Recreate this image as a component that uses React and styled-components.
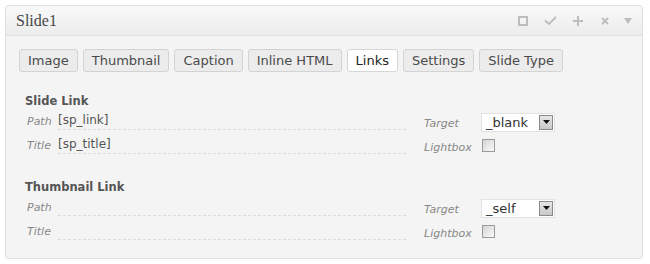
import React from "react";
import styled, { createGlobalStyle } from "styled-components";

const Global = createGlobalStyle`
  html, body { margin: 0; padding: 0; background: #fff; }
  body { font-family: "DejaVu Sans", Verdana, sans-serif; }
`;

const Panel = styled.div`
  margin: 5px 0 0 5px;
  width: 636px;
  border: 1px solid #dfdfdf;
  border-radius: 3px;
  background: #f4f4f4;
  box-sizing: content-box;
`;

const Header = styled.div`
  height: 29px;
  border-bottom: 1px solid #dfdfdf;
  background: linear-gradient(#f9f9f9, #ececec);
  display: flex;
  align-items: center;
  justify-content: space-between;
  padding: 0 4px 0 10px;
  border-radius: 3px 3px 0 0;
`;

const Title = styled.div`
  font-family: "Liberation Serif", "DejaVu Serif", serif;
  font-size: 16px;
  color: #464646;
  padding-top: 1px;
`;

const Icons = styled.div`
  display: flex;
  align-items: center;
  color: #bdbdbd;
`;

const IconBox = styled.span`
  display: inline-flex;
  width: ${(p) => p.w}px;
  justify-content: center;
`;

const Body = styled.div`
  padding: 13px 13px 18px 13px;
`;

const Tabs = styled.div`
  display: flex;
  gap: 5px;
  margin-bottom: 21px;
`;

const Tab = styled.div`
  height: 21px;
  line-height: 21px;
  padding: 0 8px;
  border: 1px solid ${(p) => (p.active ? "#d6d6d6" : "#d3d3d3")};
  border-radius: 3px;
  background: ${(p) => (p.active ? "#fff" : "#ececec")};
  color: ${(p) => (p.active ? "#222" : "#4a4a4a")};
  font-size: 13px;
  white-space: nowrap;
`;

const Section = styled.div`
  padding-left: 6px;
  & + & {
    margin-top: 25px;
  }
`;

const SectionTitle = styled.div`
  font-size: 11.5px;
  font-weight: bold;
  color: #555;
  height: 16px;
  line-height: 16px;
  margin-bottom: 1px;
`;

const Grid = styled.div`
  display: grid;
  grid-template-columns: 31px 366px 57px 1fr;
  grid-auto-rows: 20px;
  row-gap: 4px;
  padding-left: 2px;
  align-items: center;
`;

const Label = styled.div`
  font-size: 11px;
  font-style: italic;
  color: #888;
  padding-top: ${(p) => (p.right ? 6 : 3)}px;
`;

const Field = styled.div`
  width: 348px;
  height: 17px;
  padding-top: 2px;
  border-bottom: 1px dashed #dcdcdc;
  font-size: 12px;
  color: #555;
  line-height: 17px;
  align-self: start;
`;

const Select = styled.div`
  width: 70px;
  height: 17px;
  border: 1px solid #e2e2e2;
  background: #fff;
  display: flex;
  align-items: center;
  justify-content: space-between;
  padding-left: 2px;
  box-sizing: content-box;
  margin-top: 4px;
`;

const SelectText = styled.span`
  font-size: 13px;
  color: #333;
  padding-left: 2px;
`;

const Arrow = styled.span`
  width: 12px;
  height: 13px;
  border: 1px solid #8a8a8a;
  background: linear-gradient(#e6e6e6, #c8c8c8);
  margin-right: 1px;
  display: inline-flex;
  align-items: center;
  justify-content: center;
`;

const Check = styled.span`
  width: 11px;
  height: 11px;
  border: 1px solid #9a9a9a;
  background: linear-gradient(135deg, #d4d4d4, #fafafa);
  margin-left: 1px;
  margin-top: 6px;
  display: inline-block;
`;

const Row = ({ label, value, tLabel, control }) => (
  <>
    <Label>{label}</Label>
    <Field>{value}</Field>
    <Label right>{tLabel}</Label>
    <div>{control}</div>
  </>
);

const Dropdown = ({ value }) => (
  <Select>
    <SelectText>{value}</SelectText>
    <Arrow>
      <svg width="7" height="4" viewBox="0 0 7 4">
        <path d="M0 0h7L3.5 4z" fill="#111" />
      </svg>
    </Arrow>
  </Select>
);

const LinkSection = ({ title, path, ttl, target }) => (
  <Section>
    <SectionTitle>{title}</SectionTitle>
    <Grid>
      <Row label="Path" value={path} tLabel="Target" control={<Dropdown value={target} />} />
      <Row label="Title" value={ttl} tLabel="Lightbox" control={<Check />} />
    </Grid>
  </Section>
);

export default function App() {
  const tabs = ["Image", "Thumbnail", "Caption", "Inline HTML", "Links", "Settings", "Slide Type"];
  return (
    <>
      <Global />
      <Panel>
        <Header>
          <Title>Slide1</Title>
          <Icons>
            <IconBox w={26}>
              <svg width="10" height="10" viewBox="0 0 10 10">
                <rect x="1" y="1" width="8" height="8" fill="none" stroke="currentColor" strokeWidth="2" />
              </svg>
            </IconBox>
            <IconBox w={28}>
              <svg width="13" height="9" viewBox="0 0 13 9">
                <path d="M1 4.5L5 8L12 1" fill="none" stroke="currentColor" strokeWidth="1.8" />
              </svg>
            </IconBox>
            <IconBox w={27}>
              <svg width="10" height="10" viewBox="0 0 10 10">
                <path d="M5 0v10M0 5h10" stroke="currentColor" strokeWidth="2" />
              </svg>
            </IconBox>
            <IconBox w={27}>
              <svg width="8" height="8" viewBox="0 0 8 8">
                <path d="M1 1l6 6M7 1l-6 6" stroke="currentColor" strokeWidth="1.8" />
              </svg>
            </IconBox>
            <IconBox w={20}>
              <svg width="8" height="6" viewBox="0 0 8 6">
                <path d="M0 0h8L4 6z" fill="currentColor" />
              </svg>
            </IconBox>
          </Icons>
        </Header>
        <Body>
          <Tabs>
            {tabs.map((t) => (
              <Tab key={t} active={t === "Links"}>{t}</Tab>
            ))}
          </Tabs>
          <LinkSection title="Slide Link" path="[sp_link]" ttl="[sp_title]" target="_blank" />
          <LinkSection title="Thumbnail Link" path="" ttl="" target="_self" />
        </Body>
      </Panel>
    </>
  );
}
